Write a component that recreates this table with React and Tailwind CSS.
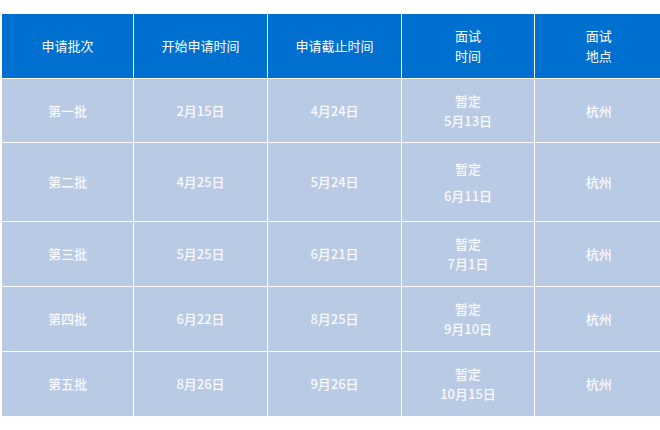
const rows = [
  { batch: '第一批', start: '2月15日', end: '4月24日', time: ['暂定', '5月13日'], place: '杭州', h: 'h-[64px]' },
  { batch: '第二批', start: '4月25日', end: '5月24日', time: ['暂定', '6月11日'], place: '杭州', h: 'h-[79px]', spaced: true },
  { batch: '第三批', start: '5月25日', end: '6月21日', time: ['暂定', '7月1日'], place: '杭州', h: 'h-[65px]' },
  { batch: '第四批', start: '6月22日', end: '8月25日', time: ['暂定', '9月10日'], place: '杭州', h: 'h-[65px]' },
  { batch: '第五批', start: '8月26日', end: '9月26日', time: ['暂定', '10月15日'], place: '杭州', h: 'h-[65px]' },
]

const font = { fontFamily: '"Microsoft YaHei", "Noto Sans CJK SC", sans-serif' }

export default function App() {
  return (
    <div className="w-[660px] h-[430px] overflow-hidden bg-white pt-[13px] pl-[1px]" style={font}>
      <table className="border-collapse text-[13px] leading-[20px] text-center table-fixed w-[661px]">
        <colgroup>
          <col className="w-[132px]" />
          <col className="w-[134px]" />
          <col className="w-[134px]" />
          <col className="w-[133px]" />
          <col className="w-[128px]" />
        </colgroup>
        <thead>
          <tr className="h-[65px] bg-[#0070d0] text-white">
            <th className="font-normal border border-white">申请批次</th>
            <th className="font-normal border border-white">开始申请时间</th>
            <th className="font-normal border border-white">申请截止时间</th>
            <th className="font-normal border border-white">面试<br />时间</th>
            <th className="font-normal border border-white border-r-0">面试<br />地点</th>
          </tr>
        </thead>
        <tbody>
          {rows.map((r) => (
            <tr key={r.batch} className={`${r.h} bg-[#b9cae5] text-[#f7f9fd] font-medium`}>
              <td className="border border-white">{r.batch}</td>
              <td className="border border-white">{r.start}</td>
              <td className="border border-white">{r.end}</td>
              <td className="border border-white">
                <div className={r.spaced ? 'flex flex-col gap-[7px]' : 'flex flex-col'}>
                  <span>{r.time[0]}</span>
                  <span>{r.time[1]}</span>
                </div>
              </td>
              <td className="border border-white border-r-0">{r.place}</td>
            </tr>
          ))}
        </tbody>
      </table>
    </div>
  )
}
